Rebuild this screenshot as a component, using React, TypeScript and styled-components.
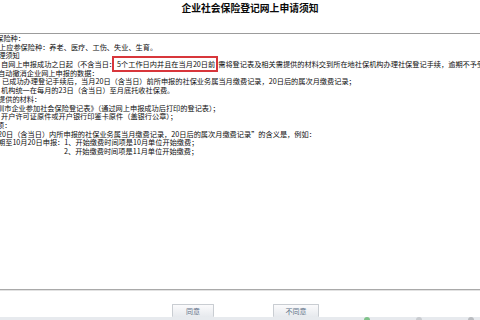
import React from "react";
import styled, { createGlobalStyle } from "styled-components";

const GlobalStyle = createGlobalStyle`
  html, body { margin: 0; padding: 0; background: #ffffff; overflow: hidden; }
  * { box-sizing: border-box; }
`;

const Page = styled.div`
  width: 480px;
  height: 320px;
  display: flex;
  flex-direction: column;
  background: #ffffff;
  font-family: "Noto Sans CJK SC", "Noto Sans", sans-serif;
  color: #0c0c0c;
  overflow: hidden;
`;

const Header = styled.div`
  height: 34px;
  flex: none;
  display: flex;
  align-items: flex-start;
  justify-content: center;
  padding: 1px 0 0 20px;
  border-bottom: 1px solid #9c9c9c;
`;

const Title = styled.h1`
  margin: 0;
  font-size: 9.8px;
  line-height: 14px;
  font-weight: 700;
  color: #0a0a0a;
  letter-spacing: 0;
`;

const Content = styled.div`
  flex: 1;
  display: flex;
  flex-direction: column;
`;

const Line = styled.div<{ $indent?: number; $pad?: number }>`
  font-size: 7.2px;
  line-height: 8.7px;
  height: 8.7px;
  white-space: nowrap;
  overflow: visible;
  text-indent: ${(p) => p.$indent ?? 0}px;
  padding-left: ${(p) => p.$pad ?? 0}px;
`;

const Mark = styled.span`
  border: 2px solid #d8363b;
  padding: 1px 1px 1px 3px;
  margin-left: -4px;
  background: #ffffff;
`;

const Divider = styled.div`
  flex: none;
  height: 2px;
  border-top: 1px solid #a9a9a9;
  border-bottom: 1px solid #e2e2e2;
`;

const Footer = styled.div`
  flex: none;
  height: 29px;
  display: flex;
  flex-direction: column;
`;

const ButtonRow = styled.div`
  flex: 1;
  display: flex;
  align-items: flex-end;
  padding: 0 0 0 172px;
  gap: 59px;
`;

const Button = styled.button<{ $w: number }>`
  width: ${(p) => p.$w}px;
  height: 13px;
  padding: 0;
  border: 1px solid #c9cdd2;
  border-bottom: none;
  border-radius: 1px;
  background: linear-gradient(#fbfbfc, #e6e9ed);
  color: #5d6f86;
  font-family: "Noto Sans CJK SC", "Noto Sans", sans-serif;
  font-size: 7px;
  line-height: 12px;
  cursor: pointer;
`;

const StatusStrip = styled.div`
  height: 3px;
  flex: none;
  display: flex;
  align-items: flex-start;
  background: #e7eaee;
  padding-left: 364px;
  gap: 46px;
`;

const Dot = styled.span<{ $c: string }>`
  width: 6px;
  height: 6px;
  border-radius: 50%;
  background: ${(p) => p.$c};
`;

export default function App() {
  return (
    <>
      <GlobalStyle />
      <Page>
        <Header>
          <Title>企业社会保险登记网上申请须知</Title>
        </Header>
        <Content>
          <Line $indent={-11}>参保险种：</Line>
          <Line $indent={-1}>上应参保险种：养老、医疗、工伤、失业、生育。</Line>
          <Line $indent={-9}>办理须知</Line>
          <Line $indent={1}>
            自网上申报成功之日起（不含当日：
            <Mark>5个工作日内并且在当月20日前</Mark>
            需将登记表及相关需提供的材料交到所在地社保机构办理社保登记手续，逾期不予受理
          </Line>
          <Line $indent={-2}>自动撤消企业网上申报的数据：</Line>
          <Line $indent={2}>
            已成功办理登记手续后，当月20日（含当日）前所申报的社保业务属当月缴费记录，20日后的属次月缴费记录；
          </Line>
          <Line $indent={1}>机构统一在每月的23日（含当日）至月底托收社保费。</Line>
          <Line $indent={-2}>提供的材料：</Line>
          <Line $indent={-3}>圳市企业参加社会保险登记表》（通过网上申报成功后打印的登记表）；</Line>
          <Line $indent={1}>开户许可证原件或开户银行印鉴卡原件（盖银行公章）；</Line>
          <Line $indent={-3}>项：</Line>
          <Line $indent={-2}>
            20日（含当日）内所申报的社保业务属当月缴费记录，20日后的属次月缴费记录”的含义是，例如：
          </Line>
          <Line $indent={-2}>期至10月20日申报：1、开始缴费时间项是10月单位开始缴费；</Line>
          <Line $pad={64}>2、开始缴费时间项是11月单位开始缴费；</Line>
        </Content>
        <Divider />
        <Footer>
          <ButtonRow>
            <Button $w={42}>同意</Button>
            <Button $w={46}>不同意</Button>
          </ButtonRow>
          <StatusStrip>
            <Dot $c="#7fc28a" />
            <Dot $c="#c9ccd0" />
            <Dot $c="#b9bcc0" />
          </StatusStrip>
        </Footer>
      </Page>
    </>
  );
}
